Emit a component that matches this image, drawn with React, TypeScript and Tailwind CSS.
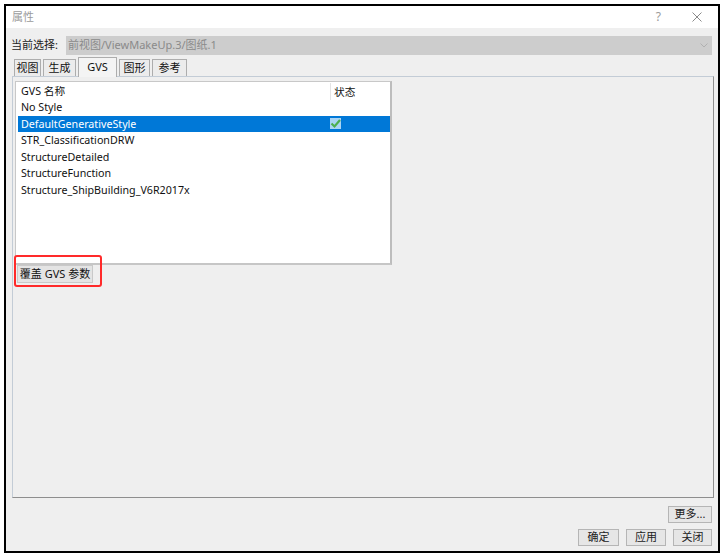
import React from "react";

const font = { fontFamily: '"Noto Sans", "Noto Sans CJK SC", sans-serif' };

function Tab({ label, active, w }: { label: string; active?: boolean; w: string }) {
  return (
    <div
      className={
        "flex items-center justify-center border border-[#adadad] border-b-0 text-[11px] text-[#111] " +
        w +
        (active ? " h-[20px] bg-[#f4f4f4] -mb-px relative z-10" : " h-[17px] bg-[#ececec]")
      }
    >
      {label}
    </div>
  );
}

function Btn({ label, w }: { label: string; w: string }) {
  return (
    <div
      className={
        "h-[17px] flex items-center justify-center border border-[#b5b5b5] bg-[#e6e6e6] text-[11px] text-[#222] " + w
      }
    >
      {label}
    </div>
  );
}

export default function App() {
  const rows = [
    "No Style",
    "DefaultGenerativeStyle",
    "STR_ClassificationDRW",
    "StructureDetailed",
    "StructureFunction",
    "Structure_ShipBuilding_V6R2017x",
  ];
  return (
    <div className="w-[727px] h-[558px] bg-white pt-[4px] pl-[4px] pr-[7px] pb-[5px]" style={font}>
      <div className="h-full border-2 border-black bg-[#efefef] flex flex-col relative">
        {/* title bar */}
        <div className="h-[22px] bg-white flex items-center pl-[6px] pr-[16px] shrink-0">
          <span className="text-[11px] text-[#9b9b9b]">属性</span>
          <span className="ml-auto text-[12px] text-[#9b9b9b] mr-[31px]">?</span>
          <svg width="10" height="10" viewBox="0 0 10 10">
            <path d="M0.5 0.5 L9.5 9.5 M9.5 0.5 L0.5 9.5" stroke="#8a8a8a" strokeWidth="1" />
          </svg>
        </div>
        {/* current selection */}
        <div className="flex items-center h-[19px] mt-[8px] pl-[5px] pr-[6px] shrink-0">
          <span className="text-[11px] text-[#222] w-[55px]">当前选择:</span>
          <div className="flex-1 h-[19px] bg-[#cdcdcd] flex items-center pl-[2px] pr-[4px]">
            <span className="text-[11px] text-[#8a8a8a]">前视图/ViewMakeUp.3/图纸.1</span>
            <svg width="8" height="5" viewBox="0 0 8 5" className="ml-auto">
              <path d="M0.5 0.5 L4 4 L7.5 0.5" stroke="#b0b0b0" fill="none" />
            </svg>
          </div>
        </div>
        {/* tabs */}
        <div className="flex items-end gap-[2px] pl-[8px] mt-[1px] h-[20px] shrink-0">
          <Tab label="视图" w="w-[27px]" />
          <Tab label="生成" w="w-[33px]" />
          <Tab label="GVS" w="w-[39px]" active />
          <Tab label="图形" w="w-[31px]" />
          <Tab label="参考" w="w-[35px]" />
        </div>
        {/* panel */}
        <div className="ml-[6px] mr-[4px] h-[422px] border border-[#c3ccd6] border-b-[#8e8e8e] border-r-[#8e8e8e] bg-[#efefef] pl-[2px] pt-[4px] shrink-0">
          <div className="w-[377px] h-[184px] bg-white border border-[#c8c8c8] border-r-[#bdbdbd] border-r-[2px] border-b-[2px] border-b-[#c6c6c6] text-[10.7px] text-[#111]">
            <div className="flex h-[17px] items-center pt-[1px]">
              <div className="w-[314px] pl-[5px]">GVS 名称</div>
              <div className="h-[17px] border-l border-[#e4e4e4] pl-[3px] pt-[1px]">状态</div>
            </div>
            {rows.map((r, i) => (
              <div
                key={r}
                className={
                  "flex h-[16.5px] items-center ml-[2px] " + (i === 1 ? "bg-[#0078d7] text-white" : "")
                }
              >
                <div className="w-[312px] pl-[3px] whitespace-nowrap">{r}</div>
                {i === 1 && (
                  <div className="w-[11px] h-[11px] bg-[#a9d4f5] flex items-center justify-center">
                    <svg width="11" height="11" viewBox="0 0 11 11">
                      <path d="M1.5 5.5 L4.5 8.5 L10 2" stroke="#4caf50" strokeWidth="2.2" fill="none" />
                    </svg>
                  </div>
                )}
              </div>
            ))}
          </div>
          <div className="ml-[2px] w-[76px] h-[18px] border border-[#c9c9c9] bg-[#e4e4e4] flex items-center justify-center text-[11px] text-[#111]">
            覆盖 GVS 参数
          </div>
        </div>
        {/* bottom buttons */}
        <div className="flex justify-end pr-[6px] mt-[8px]">
          <Btn label="更多..." w="w-[44px]" />
        </div>
        <div className="flex justify-end gap-[7px] pr-[6px] mt-[6px]">
          <Btn label="确定" w="w-[41px]" />
          <Btn label="应用" w="w-[40px]" />
          <Btn label="关闭" w="w-[39px]" />
        </div>
        {/* red annotation */}
        <div className="absolute left-[8px] top-[249px] w-[88px] h-[32px] border-2 border-[#ff2a2a] rounded-[3px]" />
      </div>
    </div>
  );
}
